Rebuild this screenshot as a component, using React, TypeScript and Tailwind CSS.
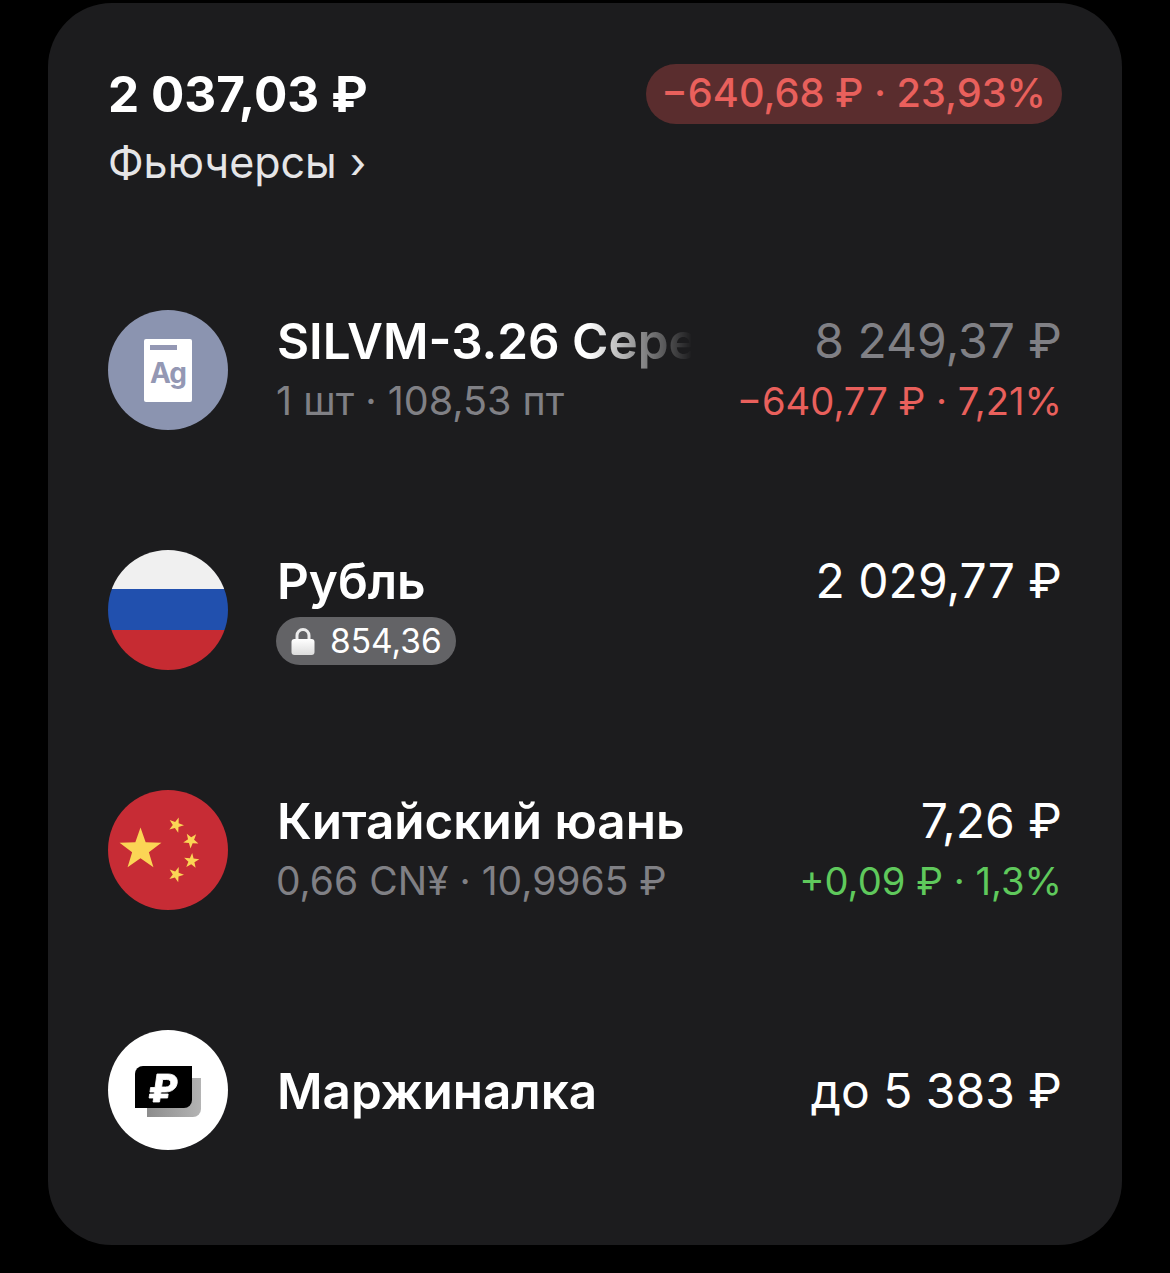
import React from "react";

function AgIcon() {
  return (
    <div className="flex h-[120px] w-[120px] shrink-0 items-center justify-center rounded-full bg-[#8b94b0]">
      <div className="flex h-[63px] w-[48px] flex-col items-center rounded-[2px] bg-white pt-[6px]">
        <div className="ml-[6px] h-[5px] w-[27px] self-start bg-[#9498b4]" />
        <span className="mt-[3px] text-[28px] font-bold leading-[40px] tracking-[-1px] text-[#9498b4]">Ag</span>
      </div>
    </div>
  );
}

function RuFlag() {
  return (
    <div className="flex h-[120px] w-[120px] shrink-0 flex-col overflow-hidden rounded-full">
      <div className="h-[39px] bg-[#f0f0f0]" />
      <div className="h-[41px] bg-[#2150ae]" />
      <div className="h-[40px] bg-[#c62b32]" />
    </div>
  );
}

const STAR = "M0 -10 L2.35 -3.24 L9.51 -3.09 L3.8 1.24 L5.88 8.09 L0 4 L-5.88 8.09 L-3.8 1.24 L-9.51 -3.09 L-2.35 -3.24 Z";

function CnFlag() {
  return (
    <svg width="120" height="120" viewBox="0 0 120 120" className="shrink-0">
      <circle cx="60" cy="60" r="60" fill="#c72c35" />
      <path d={STAR} fill="#fbd555" transform="translate(32.5 59.5) scale(2.2)" />
      <path d={STAR} fill="#fbd555" transform="translate(68 35) rotate(20) scale(0.8)" />
      <path d={STAR} fill="#fbd555" transform="translate(83 50.5) rotate(40) scale(0.8)" />
      <path d={STAR} fill="#fbd555" transform="translate(83.5 71) rotate(5) scale(0.8)" />
      <path d={STAR} fill="#fbd555" transform="translate(68 84.5) rotate(20) scale(0.8)" />
    </svg>
  );
}

function MarginIcon() {
  return (
    <svg width="120" height="120" viewBox="0 0 120 120" className="shrink-0">
      <defs>
        <linearGradient id="shadow" x1="0" y1="0" x2="1" y2="0">
          <stop offset="0" stopColor="#8c8c8c" />
          <stop offset="1" stopColor="#b4b4b4" />
        </linearGradient>
      </defs>
      <circle cx="60" cy="60" r="60" fill="#fff" />
      <path d="M39 48 H93 V79 a8 8 0 0 1 -8 8 H39 Z" fill="url(#shadow)" />
      <path d="M27 44 a8 8 0 0 1 8 -8 H84 V70 a8 8 0 0 1 -8 8 H27 Z" fill="#000" />
      <path
        transform="translate(55.500 58) skewX(-8) translate(-59.500 -58)"
        d="M51 44 H62 C69 44 72.500 48 72.500 53 C72.500 58.500 68.500 62 62 62 H57.500 V64 H65 V68 H57.500 V72 H51 V68 H46.500 V64 H51 V62 H46.500 V57.500 H51 Z M57.500 49.500 V57 H61.500 C64.500 57 66 55.500 66 53.200 C66 51 64.500 49.500 61.500 49.500 Z"
        fill="#fff"
        stroke="#fff"
        strokeWidth="0.8"
        strokeLinejoin="round"
        fillRule="evenodd"
      />
    </svg>
  );
}

function LockIcon() {
  return (
    <svg width="24" height="28" viewBox="0 0 24 28" className="mr-[15px]">
      <defs>
        <linearGradient id="lock" x1="0" y1="0" x2="0" y2="1">
          <stop offset="0" stopColor="#ffffff" />
          <stop offset="1" stopColor="#dcdcdc" />
        </linearGradient>
      </defs>
      <path d="M6 14 V8.500 a6 6 0 0 1 12 0 V14" fill="none" stroke="#ececec" strokeWidth="3" />
      <rect x="0.500" y="12" width="23" height="16" rx="3" fill="url(#lock)" />
    </svg>
  );
}

type RowProps = {
  icon: React.ReactNode;
  title: React.ReactNode;
  sub?: React.ReactNode;
  amount: string;
  amountColor?: string;
  delta?: React.ReactNode;
};

function Row({ icon, title, sub, amount, amountColor = "text-white", delta }: RowProps) {
  return (
    <div className="flex h-[120px] items-center">
      {icon}
      <div className="ml-[48px] min-w-0 flex-1">
        {title}
        {sub}
      </div>
      <div className="flex flex-col items-end pt-[2px]">
        <div className={`text-[48px] leading-[60px] ${amountColor}`}>{amount}</div>
        {delta}
      </div>
    </div>
  );
}

export default function App() {
  return (
    <div
      className="min-h-[1273px] bg-black pt-[3px]"
      style={{ fontFamily: "Inter, 'Noto Sans', sans-serif" }}
    >
      <div className="mx-[48px] h-[1242px] rounded-[64px] bg-[#1c1c1e] px-[60px] pt-[61px]">
        {/* Header */}
        <div className="flex items-start justify-between">
          <div>
            <div className="text-[49.5px] font-bold leading-[60px] text-white">2 037,03 ₽</div>
            <div className="mt-[10px] flex items-center text-[43px] leading-[56px] text-[#e5e5e7]">
              Фьючерсы
              <span className="ml-[13px] leading-[56px]">›</span>
            </div>
          </div>
          <div className="flex h-[60px] items-center rounded-full bg-[#5a2d2e] pl-[15px] pr-[16px] text-[39.7px] font-medium text-[#e9605c]">
            −640,68 ₽ · 23,93%
          </div>
        </div>

        {/* Rows */}
        <div className="mt-[120px] flex flex-col gap-[120px]">
          <Row
            icon={<AgIcon />}
            title={
              <div className="ml-px w-[415px] translate-y-px overflow-hidden whitespace-nowrap text-[49.4px] font-semibold leading-[60px] text-white [mask-image:linear-gradient(to_right,black_75%,transparent_100%)]">
                SILVM-3.26 Серебро
              </div>
            }
            sub={<div className="translate-y-px text-[39.5px] leading-[60px] text-[#808085]">1 шт · 108,53 пт</div>}
            amount="8 249,37 ₽"
            amountColor="text-[#808085]"
            delta={<div className="text-[38.2px] leading-[60px] text-[#e9605c]">−640,77 ₽ · 7,21%</div>}
          />
          <Row
            icon={<RuFlag />}
            title={<div className="ml-px text-[49.4px] font-semibold leading-[60px] text-white">Рубль</div>}
            sub={
              <div className="mb-[4px] mt-[6px] flex h-[48px] w-fit items-center rounded-full bg-[#636366] pl-[15px] pr-[14px] text-[33.5px] text-white">
                <LockIcon />
                854,36
              </div>
            }
            amount="2 029,77 ₽"
            delta={<div className="h-[60px]" />}
          />
          <Row
            icon={<CnFlag />}
            title={<div className="ml-px translate-y-px text-[49.4px] font-semibold leading-[60px] text-white">Китайский юань</div>}
            sub={<div className="translate-y-px text-[39px] leading-[60px] text-[#808085]">0,66 CN¥ · 10,9965 ₽</div>}
            amount="7,26 ₽"
            delta={<div className="text-[38.2px] leading-[60px] text-[#5fc95c]">+0,09 ₽ · 1,3%</div>}
          />
          <Row
            icon={<MarginIcon />}
            title={<div className="ml-px translate-y-px text-[49.4px] font-semibold leading-[60px] text-white">Маржиналка</div>}
            amount="до 5 383 ₽"
          />
        </div>
      </div>
    </div>
  );
}
